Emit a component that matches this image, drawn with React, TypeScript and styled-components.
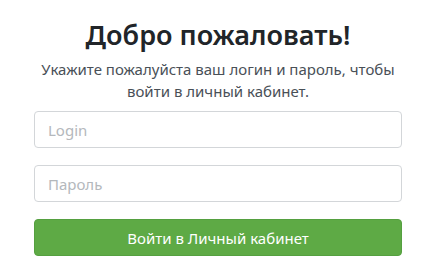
import React from "react";
import styled, { createGlobalStyle } from "styled-components";

const GlobalStyle = createGlobalStyle`
  html, body {
    margin: 0;
    padding: 0;
    background: #ffffff;
  }
  body {
    font-family: "Noto Sans", "Open Sans", sans-serif;
    color: #212529;
  }
`;

const Wrapper = styled.div`
  width: 431px;
  padding: 17px 29px 0 34px;
  box-sizing: border-box;
`;

const Title = styled.h1`
  margin: 0;
  font-size: 27px;
  font-weight: 600;
  line-height: 36px;
  text-align: center;
  color: #212529;
`;

const Subtitle = styled.p`
  margin: 5px 0 9px;
  font-size: 15px;
  line-height: 22px;
  text-align: center;
  color: #495057;
`;

const Form = styled.form`
  display: flex;
  flex-direction: column;
  gap: 17px;
`;

const Input = styled.input`
  height: 37px;
  padding: 0 13px;
  box-sizing: border-box;
  border: 1px solid #d3d6d9;
  border-radius: 4px;
  font-family: inherit;
  font-size: 15px;
  color: #495057;
  outline: none;

  &::placeholder {
    color: #b4b8bc;
  }
`;

const Button = styled.button`
  height: 37px;
  border: 1px solid #55a040;
  border-radius: 4px;
  background: #5eaa45;
  color: #ffffff;
  font-family: inherit;
  font-size: 15px;
  cursor: pointer;
`;

export default function App() {
  return (
    <>
      <GlobalStyle />
      <Wrapper>
        <Title>Добро пожаловать!</Title>
        <Subtitle>
          Укажите пожалуйста ваш логин и пароль, чтобы
          <br />
          войти в личный кабинет.
        </Subtitle>
        <Form onSubmit={(e) => e.preventDefault()}>
          <Input type="text" placeholder="Login" />
          <Input type="password" placeholder="Пароль" />
          <Button type="submit">Войти в Личный кабинет</Button>
        </Form>
      </Wrapper>
    </>
  );
}
